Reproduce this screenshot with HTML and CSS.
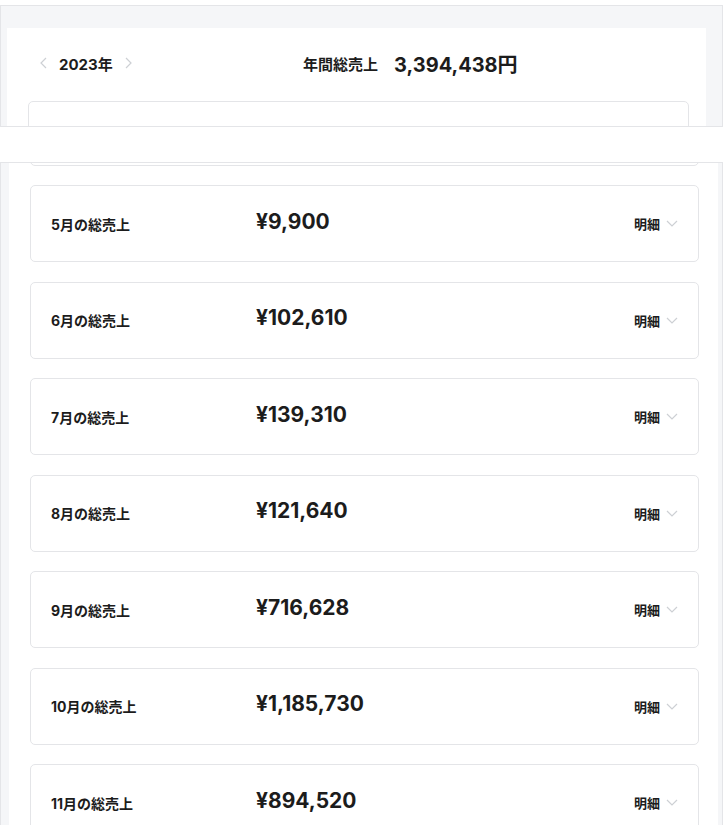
FILE: index.html
```html
<!DOCTYPE html>
<html lang="ja">
<head>
    <meta charset="UTF-8">
    <meta name="viewport" content="width=device-width, initial-scale=1.0">
    <link rel="stylesheet" href="styles.css">
    <title>売上一覧</title>
</head>
<body>
    <div class="summary">
        <div class="summary-inner">
            <div class="summary-row">
                <div class="year-nav">
                    <svg class="nav-arrow" width="7" height="12" viewBox="0 0 7 12"><polyline points="6,1 1,6 6,11" /></svg>
                    <span class="year">2023年</span>
                    <svg class="nav-arrow" width="7" height="12" viewBox="0 0 7 12"><polyline points="1,1 6,6 1,11" /></svg>
                </div>
                <div class="total">
                    <span class="total-label">年間総売上</span>
                    <span class="total-value">3,394,438円</span>
                </div>
            </div>
            <div class="card card-peek"></div>
        </div>
    </div>

    <div class="list">
        <div class="list-inner">
            <div class="month-list">
                <!-- 4月: scrolled up, only its bottom edge shows -->
                <div class="card"></div>
                <div class="card">
                    <span class="month">5月の総売上</span>
                    <span class="amount">¥9,900</span>
                    <span class="detail">明細</span>
                    <svg class="chevron" width="12" height="7" viewBox="0 0 12 7"><polyline points="1,1 6,6 11,1" /></svg>
                </div>
                <div class="card">
                    <span class="month">6月の総売上</span>
                    <span class="amount">¥102,610</span>
                    <span class="detail">明細</span>
                    <svg class="chevron" width="12" height="7" viewBox="0 0 12 7"><polyline points="1,1 6,6 11,1" /></svg>
                </div>
                <div class="card">
                    <span class="month">7月の総売上</span>
                    <span class="amount">¥139,310</span>
                    <span class="detail">明細</span>
                    <svg class="chevron" width="12" height="7" viewBox="0 0 12 7"><polyline points="1,1 6,6 11,1" /></svg>
                </div>
                <div class="card">
                    <span class="month">8月の総売上</span>
                    <span class="amount">¥121,640</span>
                    <span class="detail">明細</span>
                    <svg class="chevron" width="12" height="7" viewBox="0 0 12 7"><polyline points="1,1 6,6 11,1" /></svg>
                </div>
                <div class="card">
                    <span class="month">9月の総売上</span>
                    <span class="amount">¥716,628</span>
                    <span class="detail">明細</span>
                    <svg class="chevron" width="12" height="7" viewBox="0 0 12 7"><polyline points="1,1 6,6 11,1" /></svg>
                </div>
                <div class="card">
                    <span class="month">10月の総売上</span>
                    <span class="amount">¥1,185,730</span>
                    <span class="detail">明細</span>
                    <svg class="chevron" width="12" height="7" viewBox="0 0 12 7"><polyline points="1,1 6,6 11,1" /></svg>
                </div>
                <div class="card">
                    <span class="month">11月の総売上</span>
                    <span class="amount">¥894,520</span>
                    <span class="detail">明細</span>
                    <svg class="chevron" width="12" height="7" viewBox="0 0 12 7"><polyline points="1,1 6,6 11,1" /></svg>
                </div>
            </div>
        </div>
    </div>
</body>
</html>
```

FILE: styles.css
```css
body {
    margin: 0;
    background-color: #ffffff;
    color: #1c1c1c;
    font-family: "Inter", "Noto Sans CJK JP", sans-serif;
    font-weight: 700;
}


.summary {
    margin-top: 5px;
    border: 1px solid #e4e5e8;
    background-color: #f5f6f8;
    padding: 22px 16px 0 6px;
}


.summary-inner {
    background-color: #ffffff;
    height: 98px;
    overflow: hidden;
    padding: 0 17px 0 21px;
}


.summary-row {
    display: flex;
    align-items: center;
    height: 28px;
    margin: 21px 0 24px 12px;
}


.year-nav {
    display: flex;
    align-items: center;
    width: 263px;
}


.year {
    font-size: 15px;
    margin: 0 12px;
}


.nav-arrow polyline,
.chevron polyline {
    fill: none;
    stroke: #cdd0d4;
    stroke-width: 1.2;
}


.total {
    display: flex;
    align-items: center;
}


.total-label {
    font-size: 15px;
    margin-right: 16px;
}


.total-value {
    font-size: 20px;
}


.card {
    display: flex;
    align-items: center;
    box-sizing: border-box;
    height: 77px;
    padding: 0 20px;
    border: 1px solid #e4e5e8;
    border-radius: 5px;
    background-color: #ffffff;
}


.card-peek {
    height: 40px;
}


.list {
    margin-top: 35px;
    border: 1px solid #e4e5e8;
    border-bottom: none;
    background-color: #f5f6f8;
    padding: 0 4px 0 8px;
}


.list-inner {
    background-color: #ffffff;
    height: 662px;
    overflow: hidden;
    padding: 0 19px 0 21px;
}


.month-list {
    display: flex;
    flex-direction: column;
    gap: 19.5px;
    margin-top: -74.5px;
}


.month {
    font-size: 14px;
    width: 205px;
}


.amount {
    font-size: 21px;
    margin-bottom: 5px;
}


.detail {
    font-size: 13px;
    margin-left: auto;
    margin-right: 6px;
}
```
